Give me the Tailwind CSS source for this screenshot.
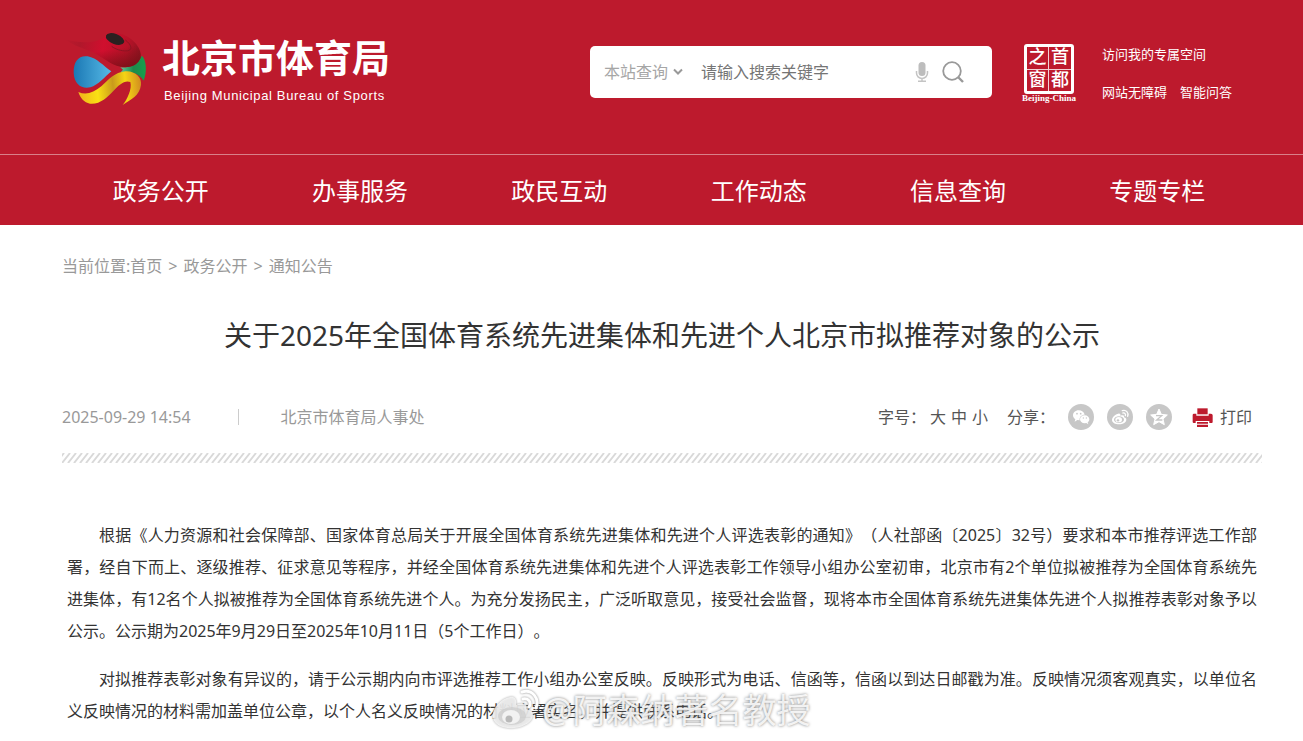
<!DOCTYPE html>
<html lang="zh-CN">

<head>
    <meta charset="UTF-8">
    <meta name="viewport" content="width=device-width, initial-scale=1.0">
    <title>北京市体育局</title>
    <script src="https://cdn.jsdelivr.net/npm/@tailwindcss/browser@4"></script>
</head>

<body class="relative min-h-screen overflow-x-hidden bg-white text-base text-[#333] font-['Noto_Sans','Noto_Sans_CJK_SC',sans-serif] [text-spacing-trim:space-all]">
    <header class="bg-[#bd1a2d] text-white">
        <!-- logo + search -->
        <div class="flex h-[155px] items-start border-b border-[#d98089] pl-[60px] pr-[71px]">
            <a href="#" class="flex pt-[25px]">
                <svg class="h-[90px] w-[100px]" viewBox="0 0 300 270" aria-hidden="true">
                    <defs>
                        <linearGradient id="red" gradientUnits="userSpaceOnUse" x1="14" y1="43" x2="245" y2="90">
                            <stop offset="0" stop-color="#bd1a2d" />
                            <stop offset="0.2" stop-color="#b0182b" />
                            <stop offset="0.5" stop-color="#d00f2e" />
                            <stop offset="0.8" stop-color="#b81228" />
                            <stop offset="1" stop-color="#8c1420" />
                        </linearGradient>
                        <linearGradient id="shade" gradientUnits="userSpaceOnUse" x1="170" y1="70" x2="180" y2="128">
                            <stop offset="0" stop-color="#7a1018" stop-opacity="0" />
                            <stop offset="1" stop-color="#7a1018" stop-opacity="0.85" />
                        </linearGradient>
                        <linearGradient id="blue" x1="0" y1="0" x2="1" y2="0">
                            <stop offset="0" stop-color="#1b78b4" />
                            <stop offset="1" stop-color="#56b9e6" />
                        </linearGradient>
                        <linearGradient id="yellow" gradientUnits="userSpaceOnUse" x1="55" y1="200" x2="245" y2="180">
                            <stop offset="0" stop-color="#f0b41b" />
                            <stop offset="0.3" stop-color="#f9e014" />
                            <stop offset="0.55" stop-color="#c99a1c" />
                            <stop offset="0.75" stop-color="#f5d414" />
                            <stop offset="1" stop-color="#d08a20" />
                        </linearGradient>
                        <linearGradient id="green" x1="0" y1="0" x2="1" y2="0">
                            <stop offset="0" stop-color="#5fc79a" />
                            <stop offset="0.5" stop-color="#1d8a4c" />
                            <stop offset="1" stop-color="#16a04c" />
                        </linearGradient>
                    </defs>
                    <path fill="url(#green)" d="M181 127C205 131 229 118 246 92C259 105 262 140 251 167C235 142 210 139 182 142L189 134Z" />
                    <path fill="url(#red)" d="M14 43C60 55 105 58 138 34C155 24 175 22 192 30C222 42 246 72 242 98C234 119 214 129 182 125C150 121 125 91 83 76C58 66 34 58 14 43Z" />
                    <path fill="url(#shade)" d="M14 43C60 55 105 58 138 34C155 24 175 22 192 30C222 42 246 72 242 98C234 119 214 129 182 125C150 121 125 91 83 76C58 66 34 58 14 43Z" />
                    <path fill="none" stroke="#8c1422" stroke-width="3" d="M155 64C172 78 212 84 213 69C213 60 205 52 196 45" />
                    <ellipse cx="165" cy="42" rx="29" ry="15" transform="rotate(22 165 42)" fill="#2b2020" />
                    <path fill="url(#blue)" d="M154 139C134 156 115 180 91 187C65 193 43 178 41 144C40 107 58 90 83 94C111 99 130 123 154 139Z" />
                    <path fill="url(#yellow)" d="M55 201C78 211 100 204 124 184C146 164 164 142 196 139C226 137 246 158 243 180C238 212 216 222 188 240C201 224 217 192 211 171C194 164 176 180 160 198C142 218 119 239 90 236C72 233 61 219 55 201Z" />
                </svg>
                <span class="flex flex-col">
                    <span class="pl-[2px] pt-[8px] text-[38px]/[46px] font-bold font-['Noto_Sans_CJK_SC',sans-serif]">北京市体育局</span>
                    <span class="pl-[4px] pt-[8px] text-[13px]/[18px] tracking-wider font-['Liberation_Sans',sans-serif]">Beijing Municipal Bureau of Sports</span>
                </span>
            </a>

            <form class="ml-auto mt-[46px] flex h-[52px] w-[402px] items-center rounded-[5px] bg-white pl-[14px]">
                <div class="relative flex items-center">
                    <select aria-label="搜索范围" class="w-[84px] appearance-none bg-transparent text-base text-[#a6a6a6] outline-none">
                        <option>本站查询</option>
                    </select>
                    <svg class="pointer-events-none absolute right-[5px] h-[8px] w-[10px]" viewBox="0 0 10 8" fill="none" stroke="#999" stroke-width="2">
                        <path d="M1 1.5L5 5.5L9 1.5" />
                    </svg>
                </div>
                <input type="text" aria-label="关键字" placeholder="请输入搜索关键字" class="ml-[13px] w-[200px] text-base outline-none placeholder:text-[#757575]">
                <button type="button" aria-label="语音" class="ml-[14px]">
                    <svg class="h-[22px] w-[14px]" viewBox="0 0 14 22">
                        <rect x="3.5" y="1" width="7" height="14" rx="3.5" fill="#bdbdbd" />
                        <path d="M1.5 10v2a5.5 5.5 0 0 0 11 0v-2M7 17.5V20M3 20.3h8" fill="none" stroke="#c4c4c4" stroke-width="1.5" />
                    </svg>
                </button>
                <button type="button" aria-label="搜索" class="ml-[13px]">
                    <svg class="h-[22px] w-[22px]" viewBox="0 0 22 22" fill="none" stroke="#999" stroke-width="1.8">
                        <circle cx="10" cy="10" r="8.8" />
                        <path d="M16 16l5 5" stroke-width="2.4" />
                    </svg>
                </button>
            </form>

            <a href="#" class="ml-[29px] mt-[44px] flex w-[56px] flex-col items-center">
                <span class="grid size-[50px] grid-cols-2 rounded-[3px] border-[3px] border-white text-center text-[18px]/[21px] font-medium font-['Liberation_Serif','Noto_Sans_CJK_SC',serif]">
                    <span class="border-b border-r border-white/80">之</span>
                    <span class="border-b border-white/80">首</span>
                    <span class="border-r border-white/80">窗</span>
                    <span>都</span>
                </span>
                <span class="whitespace-nowrap text-[9px]/[8px] font-bold font-['Liberation_Serif',serif]">Beijing-China</span>
            </a>

            <div class="ml-[25px] mt-[44px] text-[13px]/[20px]">
                <a href="#">访问我的专属空间</a>
                <div class="mt-[18px] flex gap-[13px]">
                    <a href="#">网站无障碍</a>
                    <a href="#">智能问答</a>
                </div>
            </div>
        </div>

        <!-- nav -->
        <nav class="grid h-[70px] grid-cols-6 items-center pl-[61px] pr-[46px] pt-[2px] text-center text-2xl">
            <a href="#">政务公开</a>
            <a href="#">办事服务</a>
            <a href="#">政民互动</a>
            <a href="#">工作动态</a>
            <a href="#">信息查询</a>
            <a href="#">专题专栏</a>
        </nav>
    </header>

    <main class="pl-[62px] pr-[41px]">
        <!-- breadcrumb -->
        <div class="flex pt-[29px] text-base/6 text-[#999]">
            <span>当前位置:</span>
            <a href="#">首页</a>
            <span class="px-[6px] text-base/6">&gt;</span>
            <a href="#">政务公开</a>
            <span class="px-[6px] text-base/6">&gt;</span>
            <a href="#">通知公告</a>
        </div>

        <h1 class="mt-[37px] text-center text-[28px]/[40px]">关于2025年全国体育系统先进集体和先进个人北京市拟推荐对象的公示</h1>

        <!-- date, source, share -->
        <div class="mt-[46px] flex h-[32px] items-center text-[#999]">
            <time>2025-09-29 14:54</time>
            <span class="ml-[47px] h-[16px] w-px bg-[#ccc]"></span>
            <span class="ml-[42px]">北京市体育局人事处</span>
            <div class="ml-auto flex items-center pr-[10px] text-[#555]">
                <span>字号：</span>
                <button type="button" class="ml-[4px]">大</button>
                <button type="button" class="ml-[5px]">中</button>
                <button type="button" class="ml-[5px]">小</button>
                <span class="ml-[19px]">分享：</span>
                <div class="ml-[13px] flex gap-[13px]">
                    <a href="#" aria-label="微信">
                        <svg class="size-[26px]" viewBox="0 0 78 78">
                            <circle cx="39" cy="39" r="39" fill="#c7c7c7" />
                            <path fill="#fff" d="M32 19C22 19 15 26 15 34C15 39 18 43 22 46L20 53L28 48L35 49C33 39 41 32 50 32C48 24 41 19 32 19Z" />
                            <path fill="#fff" d="M50 34C42 34 36 40 36 46C36 53 42 58 50 58L55 57L61 61L59 55C62 53 64 50 64 46C64 40 58 34 50 34Z" />
                            <g fill="#c7c7c7">
                                <circle cx="27" cy="29" r="2.5" />
                                <circle cx="38" cy="29" r="2.5" />
                                <circle cx="46" cy="42" r="2" />
                                <circle cx="55" cy="42" r="2" />
                            </g>
                        </svg>
                    </a>
                    <a href="#" aria-label="微博">
                        <svg class="size-[26px]" viewBox="0 0 78 78">
                            <circle cx="39" cy="39" r="39" fill="#c7c7c7" />
                            <path fill="#fff" d="M34 29C25 30 15 40 15 48C15 56 25 61 36 61C49 61 58 54 58 47C58 42 54 41 51 40C53 34 49 32 40 35C41 31 39 28 34 29Z" />
                            <ellipse cx="36" cy="47" rx="15" ry="10" fill="#c7c7c7" />
                            <ellipse cx="35" cy="47" rx="10" ry="8" fill="#fff" />
                            <circle cx="33" cy="49" r="3.5" fill="#c7c7c7" />
                            <path d="M46 20C57 16 66 26 62 37M48 27C53 26 57 30 55 35" fill="none" stroke="#fff" stroke-width="4" stroke-linecap="round" />
                        </svg>
                    </a>
                    <a href="#" aria-label="QQ空间">
                        <svg class="size-[26px]" viewBox="0 0 78 78">
                            <circle cx="39" cy="39" r="39" fill="#c7c7c7" />
                            <path fill="#fff" stroke="#fff" stroke-width="3" stroke-linejoin="round" d="M39 15L46 31L64 33L51 45L55 62L39 53L23 62L27 45L14 33L32 31Z" />
                            <path d="M30 35H47L32 48H49" fill="none" stroke="#c7c7c7" stroke-width="4" />
                        </svg>
                    </a>
                </div>
                <button type="button" class="ml-5 flex items-center gap-[7px]">
                    <svg class="h-[20px] w-[21px]" viewBox="0 0 63 60" fill="#bd1a2d">
                        <path d="M16 4H47V22H16Z" />
                        <path d="M2 24Q2 20 6 20H13V26H50V20H57Q62 20 62 25V45Q62 48 59 48H52V42H11V48H5Q2 48 2 44Z" />
                        <path d="M15 45H48V50H15ZM15 53H48V60H15Z" />
                    </svg>
                    打印
                </button>
            </div>
        </div>

        <svg class="mt-[20px] h-[10px] w-full" aria-hidden="true">
            <pattern id="stripe" width="6" height="10" patternUnits="userSpaceOnUse">
                <path d="M-6 10L2 0M0 10L8 0M6 10L14 0" stroke="#d9d9d9" stroke-width="2" />
            </pattern>
            <rect width="100%" height="10" fill="url(#stripe)" />
        </svg>

        <!-- article -->
        <article class="flex flex-col gap-4 px-[5px] pt-[56px] text-justify text-base/8 indent-8">
            <p>根据《人力资源和社会保障部、国家体育总局关于开展全国体育系统先进集体和先进个人评选表彰的通知》（人社部函〔2025〕32号）要求和本市推荐评选工作部署，经自下而上、逐级推荐、征求意见等程序，并经全国体育系统先进集体和先进个人评选表彰工作领导小组办公室初审，北京市有2个单位拟被推荐为全国体育系统先进集体，有12名个人拟被推荐为全国体育系统先进个人。为充分发扬民主，广泛听取意见，接受社会监督，现将本市全国体育系统先进集体先进个人拟推荐表彰对象予以公示。公示期为2025年9月29日至2025年10月11日（5个工作日）。</p>
            <p>对拟推荐表彰对象有异议的，请于公示期内向市评选推荐工作小组办公室反映。反映形式为电话、信函等，信函以到达日邮戳为准。反映情况须客观真实，以单位名义反映情况的材料需加盖单位公章，以个人名义反映情况的材料应署实名，并提供联系电话。</p>
        </article>
    </main>

    <!-- watermark -->
    <div class="pointer-events-none absolute left-[490px] top-[688px] flex items-center text-[34px]/[44px] text-white/85 [text-shadow:0_0_3px_#777]">
        <svg class="h-[42px] w-[52px] drop-shadow-[0_0_1px_#888]" viewBox="0 0 52 42">
            <path fill="#fff" fill-opacity="0.75" d="M20 8C10 10 1 21 3 29C5 37 15 40 24 39C35 38 43 32 43 26C43 22 39 21 36 20C38 15 34 13 26 16C27 11 25 7 20 8Z" />
            <ellipse cx="22" cy="27" rx="14" ry="9" fill="#c4c4c4" fill-opacity="0.5" />
            <ellipse cx="21" cy="28" rx="9" ry="7" fill="#fff" fill-opacity="0.7" />
            <circle cx="19" cy="30" r="3.5" fill="#aaa" fill-opacity="0.8" />
            <path d="M32 3C42 0 50 9 46 19M33 10C38 9 42 13 39 18" fill="none" stroke="#fff" stroke-width="3" stroke-linecap="round" />
        </svg>
        <span>@阿森纳著名教授</span>
    </div>
</body>

</html>
